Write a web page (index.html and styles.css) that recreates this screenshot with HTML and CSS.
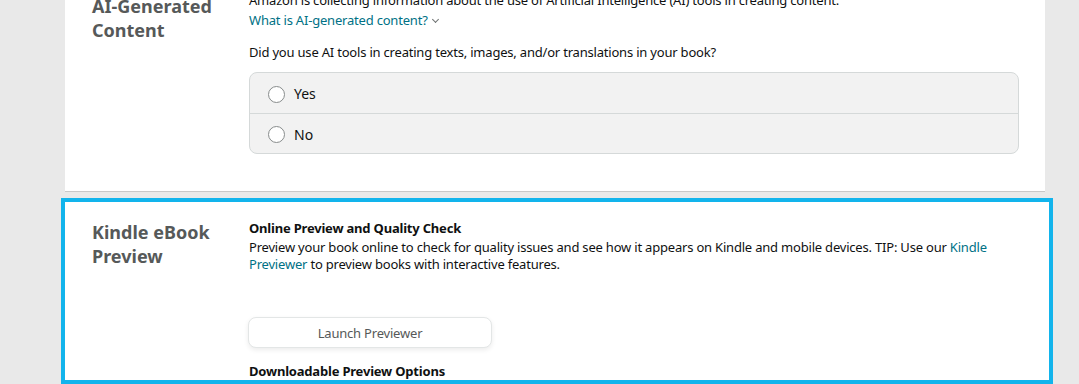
FILE: index.html
```html
<!DOCTYPE html>
<html lang="en">
  <head>
    <meta charset="utf-8">
    <title>Kindle eBook Content</title>
    <link rel="stylesheet" href="styles.css">
  </head>
  <body>
    <div class="page">
      <section class="panel ai-panel">
        <h2 class="panel-title">AI-Generated Content</h2>
        <div class="panel-body">
          <p class="lead">Amazon is collecting information about the use of Artificial Intelligence (AI) tools in creating content.</p>
          <a class="link toggle">What is AI-generated content? <span class="caret"></span></a>
          <p class="question">Did you use AI tools in creating texts, images, and/or translations in your book?</p>
          <div class="radio-group">
            <label class="radio-row"><span class="radio"></span>Yes</label>
            <label class="radio-row"><span class="radio"></span>No</label>
          </div>
        </div>
      </section>

      <section class="panel preview-panel">
        <h2 class="panel-title">Kindle eBook Preview</h2>
        <div class="panel-body">
          <h3 class="sub-title">Online Preview and Quality Check</h3>
          <p class="text">Preview your book online to check for quality issues and see how it appears on Kindle and mobile devices. TIP: Use our <a class="link">Kindle Previewer</a> to preview books with interactive features.</p>
          <button class="btn">Launch Previewer</button>
          <h3 class="sub-title last">Downloadable Preview Options</h3>
        </div>
      </section>
    </div>
  </body>
</html>
```

FILE: styles.css
```css
html { box-sizing : border-box }
*, *:before, *:after { box-sizing : inherit }

:root {
  --c-page : #e9e9e9;
  --c-card : #ffffff;
  --c-fg : #0f1111;
  --c-title : #565959;
  --c-link : #007185;
  --c-line : #d5d9d9;
  --c-field : #f2f2f2;
  --c-focus : #12b4ec;

  --f-prop : "Noto Sans", "Open Sans", sans-serif;
}

body {
  margin : 0;
  height : 384px;
  overflow : hidden;
  background-color : var(--c-page);
  font-family : var(--f-prop);
  color : var(--c-fg);
}

.page {
  width : 980px;
  margin : -10px 0 0 65px;
}

.panel {
  display : grid;
  grid-template-columns : 157px 1fr;
  padding-left : 27px;
  background-color : var(--c-card);
}

.ai-panel {
  padding-bottom : 37px;
  padding-right : 26px;
  border-bottom : 1px solid #c8c8c8;
}

.preview-panel {
  margin : 6px 0 0 -4px;
  width : 992px;
  border : 4px solid var(--c-focus);
  padding : 15px 26px 0 27px;
}

.panel-title {
  margin : 4px 0 0;
  font-size : 18px;
  line-height : 24px;
  font-weight : 700;
  color : var(--c-title);
  width : 130px;
}

.preview-panel .panel-title { margin-top : 3px }

.panel-body {
  font-size : 13px;
  line-height : 20px;
  letter-spacing : -0.2px;
}

p { margin : 0 }

.link {
  color : var(--c-link);
  text-decoration : none;
  cursor : pointer;
}

.toggle { display : inline-block }

.caret {
  display : inline-block;
  width : 5px;
  height : 5px;
  margin : 0 0 3px 2px;
  border-right : 1px solid #6f7373;
  border-bottom : 1px solid #6f7373;
  transform : rotate(45deg);
}

.question { margin-top : 12px }

.radio-group {
  margin-top : 10px;
  border : 1px solid var(--c-line);
  border-radius : 8px;
  background-color : var(--c-field);
  letter-spacing : 0;
}

.radio-row {
  display : flex;
  align-items : center;
  height : 40px;
  padding : 2px 0 0 18px;
  font-size : 14px;
}

.radio-row + .radio-row { border-top : 1px solid var(--c-line) }

.radio {
  width : 17px;
  height : 17px;
  margin-right : 9px;
  border : 1px solid #888c8c;
  border-radius : 50%;
  background-color : #fff;
}

.sub-title {
  margin : 1px 0 0;
  font-size : 13px;
  line-height : 20px;
  font-weight : 700;
}

.sub-title.last {
  margin-top : 14px;
  line-height : 18px;
}

.text {
  margin-top : 1px;
  line-height : 17px;
}

.btn {
  display : block;
  width : 244px;
  height : 31px;
  margin : 44px 0 0 -1px;
  border : 1px solid #e3e6e6;
  border-radius : 8px;
  background-color : #fff;
  box-shadow : 0 2px 5px rgba(15, 17, 17, 0.08);
  font-family : var(--f-prop);
  font-size : 13px;
  letter-spacing : -0.2px;
  color : var(--c-title);
}
```
